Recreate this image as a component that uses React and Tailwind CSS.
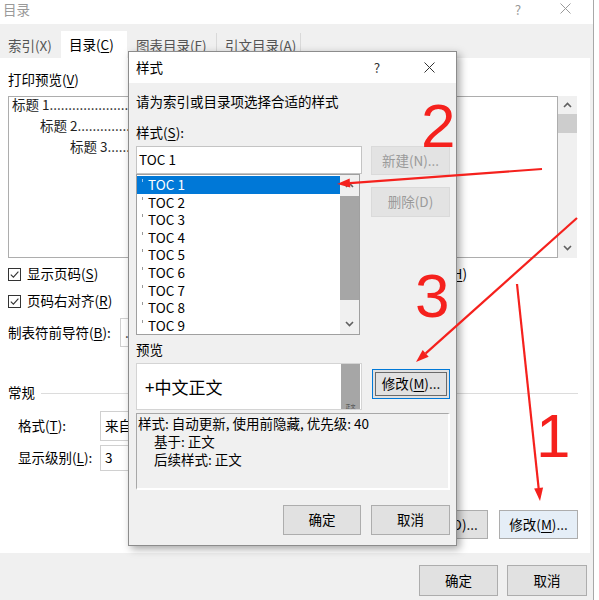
import React from "react";

const Mn = ({ children }) => (
  <span className="underline decoration-1 underline-offset-[2px]">{children}</span>
);

const Chevron = ({ up }) => (
  <svg width="9" height="6" viewBox="0 0 9 6">
    <path
      d={up ? "M1 5 L4.5 1.5 L8 5" : "M1 1 L4.5 4.5 L8 1"}
      fill="none"
      stroke="#606060"
      strokeWidth="1.6"
    />
  </svg>
);

const Close = ({ color }) => (
  <svg width="11" height="11" viewBox="0 0 11 11">
    <path d="M0.5 0.5 L10.5 10.5 M10.5 0.5 L0.5 10.5" stroke={color} strokeWidth="1" />
  </svg>
);

const Checkbox = () => (
  <span className="w-[13px] h-[13px] border border-[#333] bg-white flex items-center justify-center shrink-0">
    <svg width="11" height="11" viewBox="0 0 11 11">
      <path d="M1.8 5.6 L4.4 8.2 L9.4 2.6" fill="none" stroke="#333" strokeWidth="1.1" />
    </svg>
  </span>
);

const Btn = ({ children, className = "" }) => (
  <div
    className={`flex items-center justify-center bg-[#e1e1e1] border border-[#adadad] ${className}`}
  >
    {children}
  </div>
);

// arrow line with a wedge head at (x2, y2)
const Arrow = ({ x1, y1, x2, y2 }) => {
  const dx = x2 - x1;
  const dy = y2 - y1;
  const len = Math.sqrt(dx * dx + dy * dy);
  const ux = dx / len;
  const uy = dy / len;
  const bx = x2 - ux * 13;
  const by = y2 - uy * 13;
  const nx = -uy * 4.5;
  const ny = ux * 4.5;
  return (
    <g>
      <line x1={x1} y1={y1} x2={bx} y2={by} stroke="#f5211d" strokeWidth="2.2" />
      <polygon
        points={`${x2},${y2} ${bx + nx},${by + ny} ${bx - nx},${by - ny}`}
        fill="#f5211d"
      />
    </g>
  );
};

const TOC_ITEMS = ["TOC 1", "TOC 2", "TOC 3", "TOC 4", "TOC 5", "TOC 6", "TOC 7", "TOC 8", "TOC 9"];

const StyleDialog = () => (
  <div className="absolute left-[128px] top-[51px] w-[329px] h-[495px] bg-[#f0f0f0] border border-[#8c8c8c] shadow-[3px_3px_8px_rgba(0,0,0,0.35)] flex flex-col">
    {/* title */}
    <div className="h-[31px] bg-white flex items-center shrink-0">
      <span className="pl-[7px]">样式</span>
      <span className="ml-auto w-[46px] text-center text-[#333]">?</span>
      <span className="w-[46px] mr-[4px] ml-[6px] flex justify-center">
        <Close color="#333" />
      </span>
    </div>

    <div className="flex-1 pl-[7px] flex flex-col">
      <div className="mt-[10px] h-[18px] flex items-center">请为索引或目录项选择合适的样式</div>
      <div className="mt-[13px] h-[18px] flex items-center">
        样式(<Mn>S</Mn>):
      </div>

      <div className="mt-[4px] flex">
        <div className="w-[226px] flex flex-col">
          <div className="h-[28px] border border-[#c4c4c4] bg-white flex items-center pl-[2px]">TOC 1</div>
          <div className="w-[224px] h-[161px] border border-[#a0a0a0] bg-white flex">
            <div className="flex-1 pt-[1px]">
              {TOC_ITEMS.map((item, i) => (
                <div
                  key={item}
                  className={`h-[17.6px] flex items-center pl-[5px] ${
                    i === 0 ? "bg-[#0078d7] text-white" : ""
                  }`}
                >
                  <span
                    className={`w-[1px] h-[3px] self-start mt-[3px] ${
                      i === 0 ? "bg-[#9cc7ef]" : "bg-[#999]"
                    }`}
                  />
                  <span className="ml-[5px]">{item}</span>
                </div>
              ))}
            </div>
            <div className="w-[19px] bg-[#f0f0f0] flex flex-col">
              <div className="h-[20px] flex items-center justify-center">
                <Chevron up />
              </div>
              <div className="mt-[1px] h-[104px] bg-[#a6a6a6]" />
              <div className="mt-auto h-[20px] flex items-center justify-center">
                <Chevron />
              </div>
            </div>
          </div>
        </div>
        <div className="ml-[9px] w-[79px] flex flex-col">
          <div className="h-[29px] flex items-center justify-center bg-[#e3e3e3] border border-[#dadada] text-[#9a9a9a]">
            新建(N)...
          </div>
          <div className="mt-[12px] h-[30px] flex items-center justify-center bg-[#e3e3e3] border border-[#dadada] text-[#9a9a9a]">
            删除(D)
          </div>
        </div>
      </div>

      <div className="mt-[6px] h-[18px] flex items-center">预览</div>

      <div className="mt-[4px] flex">
        <div className="w-[226px] h-[47px] border border-[#d4d4d4] bg-white flex">
          <div className="flex-1 flex items-center pl-[8px] text-[17px]">+中文正文</div>
          <div className="w-[19px] mr-[1px] bg-[#a6a6a6] flex items-end justify-center">
            <span className="text-[5px] leading-[7px] text-[#444]">正文</span>
          </div>
        </div>
        <div className="ml-[10px] mt-[6px] w-[78px] h-[30px] flex items-center justify-center bg-[#e1e1e1] border border-[#0078d7] shadow-[inset_0_0_0_2px_#e1e1e1,inset_0_0_0_3px_#6a6a6a]">
          修改(<Mn>M</Mn>)...
        </div>
      </div>

      <div className="mt-[3px] w-[314px] h-[77px] border-t border-l border-[#a8a8a8] border-b-2 border-r-2 border-b-white border-r-white bg-[#f0f0f0] pt-[1px]">
        <div className="h-[18px] flex items-center pl-[1px]">样式: 自动更新, 使用前隐藏, 优先级: 40</div>
        <div className="h-[18px] flex items-center pl-[17px]">基于: 正文</div>
        <div className="h-[18px] flex items-center pl-[17px]">后续样式: 正文</div>
      </div>

      <div className="mt-[15px] w-[314px] flex justify-end gap-[10px]">
        <Btn className="w-[78px] h-[30px]">确定</Btn>
        <Btn className="w-[79px] h-[30px]">取消</Btn>
      </div>
    </div>
  </div>
);

const App = () => {
  return (
    <div className="w-[599px] h-[600px] relative overflow-hidden bg-white flex font-['Noto_Sans_CJK_SC',sans-serif] text-[13.5px] text-black leading-none">
      <div className="w-[594px] h-full bg-[#f0f0f0] border-r border-[#a8a8a8] flex flex-col">
        {/* title bar */}
        <div className="h-[24px] bg-white flex items-start shrink-0 text-[#9a9a9a]">
          <span className="pl-[3px] pt-[1px] leading-[16px]">目录</span>
          <span className="ml-auto w-[20px] pt-[1px] text-center leading-[16px]">?</span>
          <span className="ml-[32px] mr-[22px] mt-[3px] flex">
            <Close color="#9a9a9a" />
          </span>
        </div>

        {/* tabs */}
        <div className="h-[34px] flex items-end shrink-0">
          <div className="w-[61px] h-[25px] flex items-center pl-[8px] text-[#555]">索引(X)</div>
          <div className="w-[66px] h-[27px] bg-white flex items-center pl-[8px]">
            目录(<Mn>C</Mn>)
          </div>
          <div className="w-[90px] h-[25px] flex items-center pl-[9px] border-r border-[#d9d9d9] text-[#555]">
            图表目录(F)
          </div>
          <div className="w-[84px] h-[25px] flex items-center pl-[8px] border-r border-[#d9d9d9] text-[#555]">
            引文目录(A)
          </div>
        </div>

        {/* panel */}
        <div className="w-[590px] h-[495px] bg-white flex flex-col pl-[8px] shrink-0">
          <div className="mt-[12px] h-[20px] flex items-center">
            打印预览(<Mn>V</Mn>)
          </div>
          <div className="mt-[6px] w-[569px] h-[162px] flex">
            <div className="w-[550px] h-full border border-[#adadad] bg-white flex flex-col gap-[5px] text-[#222]">
              <div className="h-[16px] flex items-center pl-[3px]">
                标题 1......................................................................................
              </div>
              <div className="h-[16px] flex items-center pl-[31px]">
                标题 2..................................................................................
              </div>
              <div className="h-[16px] flex items-center pl-[61px]">
                标题 3............................................................................
              </div>
            </div>
            <div className="w-[19px] h-full bg-[#f0f0f0] flex flex-col">
              <div className="h-[18px] flex items-center justify-center">
                <Chevron up />
              </div>
              <div className="h-[19px] bg-[#cdcdcd]" />
              <div className="mt-auto h-[20px] flex items-center justify-center">
                <Chevron />
              </div>
            </div>
          </div>

          <div className="mt-[6px] h-[20px] w-[459px] flex items-center justify-between">
            <div className="flex items-center">
              <Checkbox />
              <span className="ml-[6px]">
                显示页码(<Mn>S</Mn>)
              </span>
            </div>
            <div className="flex items-center">
              <Checkbox />
              <span className="ml-[6px]">
                使用超链接而不使用页码(<Mn>H</Mn>)
              </span>
            </div>
          </div>
          <div className="mt-[7px] h-[20px] flex items-center">
            <Checkbox />
            <span className="ml-[6px]">
              页码右对齐(<Mn>R</Mn>)
            </span>
          </div>
          <div className="mt-[7px] h-[29px] flex items-center">
            <span className="w-[112px]">
              制表符前导符(<Mn>B</Mn>):
            </span>
            <div className="w-[150px] h-[29px] border border-[#d0d0d0] bg-white flex items-center pl-[4px] text-[#333]">
              ..........
            </div>
          </div>

          <div className="mt-[36px] h-[20px] w-[570px] flex items-center">
            <span>常规</span>
            <div className="ml-[6px] flex-1 h-px bg-[#dcdcdc]" />
          </div>
          <div className="mt-[8px] h-[30px] flex items-center pl-[10px]">
            <span className="w-[82px]">
              格式(<Mn>T</Mn>):
            </span>
            <div className="w-[200px] h-[30px] border border-[#d0d0d0] bg-white flex items-center pl-[4px]">
              来自模板
            </div>
          </div>
          <div className="mt-[4px] h-[26px] flex items-center pl-[10px]">
            <span className="w-[82px]">
              显示级别(<Mn>L</Mn>):
            </span>
            <div className="w-[60px] h-[26px] border border-[#d0d0d0] bg-white flex items-center pl-[4px]">
              3
            </div>
          </div>

          <div className="mt-[39px] w-[570px] flex justify-end gap-[11px]">
            <Btn className="w-[78px] h-[29px]">选项(O)...</Btn>
            <Btn className="w-[79px] h-[29px] border-[#0078d7] bg-[#e5eef7]">
              修改(<Mn>M</Mn>)...
            </Btn>
          </div>
        </div>

        {/* bottom buttons */}
        <div className="flex justify-end gap-[9px] pt-[12px] pr-[6px]">
          <Btn className="w-[79px] h-[31px]">确定</Btn>
          <Btn className="w-[80px] h-[31px]">取消</Btn>
        </div>
      </div>

      <StyleDialog />

      {/* red annotations */}
      <svg className="absolute left-0 top-0 pointer-events-none" width="599" height="600">
        <Arrow x1={542} y1={169} x2={337} y2={184} />
        <Arrow x1={577} y1={218} x2={416} y2={362} />
        <Arrow x1={517} y1={284} x2={540} y2={501} />
      </svg>
      <div className="absolute left-[421px] top-[95px] text-[62px] leading-none text-[#f5211d] font-['Liberation_Sans',sans-serif]">
        2
      </div>
      <div className="absolute left-[415px] top-[265px] text-[62px] leading-none text-[#f5211d] font-['Liberation_Sans',sans-serif]">
        3
      </div>
      <div className="absolute left-[536px] top-[405px] text-[62px] leading-none text-[#f5211d] font-['Liberation_Sans',sans-serif]">
        1
      </div>
    </div>
  );
};

export default App;
